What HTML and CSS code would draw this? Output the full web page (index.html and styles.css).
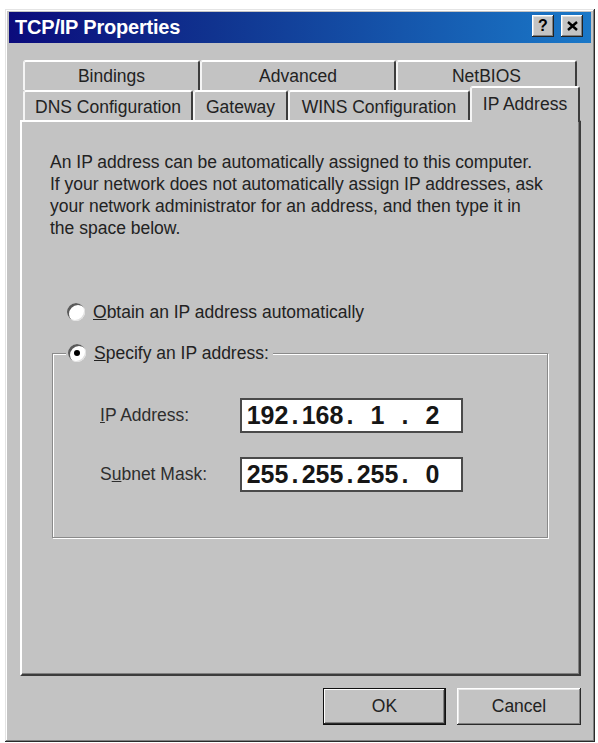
FILE: index.html
```html
<!DOCTYPE html>
<html lang="en">
<head>
<meta charset="utf-8">
<title>TCP/IP Properties</title>
<link rel="stylesheet" href="styles.css">
</head>
<body>
<div class="window">
  <div class="titlebar">
    <span class="title">TCP/IP Properties</span>
    <div class="title-buttons">
      <span class="tbtn help">?</span>
      <span class="tbtn close">
        <svg width="11" height="10" viewBox="0 0 11 10"><path d="M1 1 L10 9 M10 1 L1 9" stroke="#000" stroke-width="2.4" fill="none"/></svg>
      </span>
    </div>
  </div>

  <div class="tabs">
    <div class="tab-row">
      <div class="tab t-bindings">Bindings</div>
      <div class="tab t-advanced">Advanced</div>
      <div class="tab t-netbios">NetBIOS</div>
    </div>
    <div class="tab-row front">
      <div class="tab t-dns">DNS Configuration</div>
      <div class="tab t-gateway">Gateway</div>
      <div class="tab t-wins">WINS Configuration</div>
      <div class="tab t-ip sel">IP Address</div>
    </div>
  </div>

  <div class="panel">
    <p class="intro">An IP address can be automatically assigned to this computer.<br>If your network does not automatically assign IP addresses, ask<br>your network administrator for an address, and then type it in<br>the space below.</p>

    <div class="opt">
      <span class="radio"></span>
      <span><u>O</u>btain an IP address automatically</span>
    </div>

    <fieldset class="group">
      <legend>
        <span class="opt-legend">
          <span class="radio checked"></span>
          <span><u>S</u>pecify an IP address:</span>
        </span>
      </legend>
      <div class="fields">
        <span class="field-label"><u>I</u>P Address:</span>
        <div class="ipbox">
          <span class="oct">192</span><span class="dot">.</span><span class="oct">168</span><span class="dot">.</span><span class="oct">1</span><span class="dot">.</span><span class="oct">2</span>
        </div>
        <span class="field-label">S<u>u</u>bnet Mask:</span>
        <div class="ipbox">
          <span class="oct">255</span><span class="dot">.</span><span class="oct">255</span><span class="dot">.</span><span class="oct">255</span><span class="dot">.</span><span class="oct">0</span>
        </div>
      </div>
    </fieldset>
  </div>

  <div class="buttons">
    <button class="btn default">OK</button>
    <button class="btn cancel">Cancel</button>
  </div>
</div>
</body>
</html>
```

FILE: styles.css
```css
* {
  box-sizing: border-box;
}

body {
  margin: 0;
  background: #ffffff;
  font-family: "Liberation Sans", Arial, sans-serif;
  font-size: 17.5px;
  color: #222222;
}

.window {
  margin: 9px 0 0 5px;
  width: 590px;
  height: 733px;
  padding: 3px 4px;
  background: #c3c3c3;
  display: flex;
  flex-direction: column;
  box-shadow:
    inset -1px -1px #2a2a2a,
    inset 1px 1px #e4e4e4,
    inset -2px -2px #808080,
    inset 2px 2px #ffffff;
}

/* Title bar */
.titlebar {
  flex: none;
  height: 31px;
  padding: 0 8px 0 6px;
  display: flex;
  align-items: center;
  justify-content: space-between;
  background: linear-gradient(to right, #0b0b7c 0%, #10338f 35%, #1a78c8 100%);
}

.title {
  color: #ffffff;
  font-weight: bold;
  font-size: 20px;
  letter-spacing: -0.2px;
}

.title-buttons {
  display: flex;
  gap: 7px;
  margin-top: -3px;
}

.tbtn {
  width: 22px;
  height: 22px;
  display: flex;
  align-items: center;
  justify-content: center;
  background: #c3c3c3;
  color: #000000;
  font-weight: bold;
  font-size: 16px;
  box-shadow:
    inset -1px -1px #222222,
    inset 1px 1px #ffffff,
    inset -2px -2px #808080,
    inset 2px 2px #dfdfdf;
}

/* Tabs */
.tabs {
  flex: none;
  margin: 17px 0 0 14px;
}

.tab-row {
  display: flex;
  align-items: flex-end;
  height: 30px;
}

.tab {
  flex: none;
  height: 30px;
  display: flex;
  align-items: center;
  justify-content: center;
  background: #c3c3c3;
  border-top: 2px solid #ffffff;
  border-left: 2px solid #f4f4f4;
  border-right: 2px solid #3c3c3c;
  border-radius: 3px 3px 0 0;
  white-space: nowrap;
}

.front .tab {
  padding-top: 2px;
}

.t-bindings { width: 177px; }
.t-advanced { width: 196px; }
.t-netbios  { width: 181px; }
.t-dns      { width: 170px; }
.t-gateway  { width: 95px; }
.t-wins     { width: 182px; }
.t-ip       { width: 110px; }

.front .tab.sel {
  height: 36px;
  margin-bottom: -2px;
  padding-top: 0;
  padding-bottom: 2px;
  position: relative;
  z-index: 2;
}

/* Panel */
.panel {
  flex: none;
  width: 561px;
  height: 556px;
  margin-left: 11px;
  padding: 29px 20px 0 28px;
  border: 2px solid;
  border-color: #ffffff #3c3c3c #3c3c3c #ffffff;
  box-shadow: inset -1px -1px #808080;
}

.intro {
  margin: 0;
  line-height: 22px;
}

.opt,
.opt-legend {
  display: flex;
  align-items: center;
  gap: 8px;
  height: 22px;
}

.opt {
  margin: 62px 0 0 17px;
}

.radio {
  flex: none;
  position: relative;
  width: 18px;
  height: 18px;
  border-radius: 50%;
  background: #ffffff;
  box-shadow:
    inset 2px 2px 0 #5a5a5a,
    inset -1px -1px 0 #e0e0e0;
}

.radio.checked::after {
  content: "";
  position: absolute;
  left: 6px;
  top: 6px;
  width: 6px;
  height: 6px;
  border-radius: 50%;
  background: #000000;
}

/* Group box */
.group {
  width: 496px;
  margin: 19px 0 0 2px;
  padding: 0 0 45px 13px;
  border: 1px solid #8a8a8a;
  box-shadow: 1px 1px 0 #ffffff, inset 1px 1px 0 #ffffff;
}

.group legend {
  padding: 0 4px 0 2px;
  background: #c3c3c3;
}

.fields {
  display: grid;
  grid-template-columns: 140px 223px;
  row-gap: 24px;
  align-items: center;
  margin: 34px 0 0 34px;
}

.field-label {
  color: #2e2e2e;
}

.ipbox {
  height: 35px;
  display: flex;
  align-items: center;
  padding-left: 2px;
  background: #ffffff;
  border: 2px solid #4a4a4a;
  font-family: "Liberation Sans", Arial, sans-serif;
  font-weight: bold;
  font-size: 25px;
  color: #161616;
}

.oct {
  width: 47px;
  text-align: center;
}

.dot {
  width: 8px;
  text-align: center;
}

/* Buttons */
.buttons {
  flex: none;
  display: flex;
  justify-content: flex-end;
  gap: 11px;
  margin: 12px 10px 0 0;
}

.btn {
  width: 123px;
  height: 37px;
  padding: 0;
  border: none;
  background: #c3c3c3;
  font: inherit;
  color: #222222;
  box-shadow:
    inset -1px -1px #2a2a2a,
    inset 1px 1px #ffffff,
    inset -2px -2px #808080,
    inset 2px 2px #e8e8e8;
}

.btn.cancel {
  width: 124px;
}

.btn.default {
  box-shadow:
    inset 0 0 0 1px #111111,
    inset -2px -2px #2a2a2a,
    inset 2px 2px #ffffff,
    inset -3px -3px #808080;
}
```
